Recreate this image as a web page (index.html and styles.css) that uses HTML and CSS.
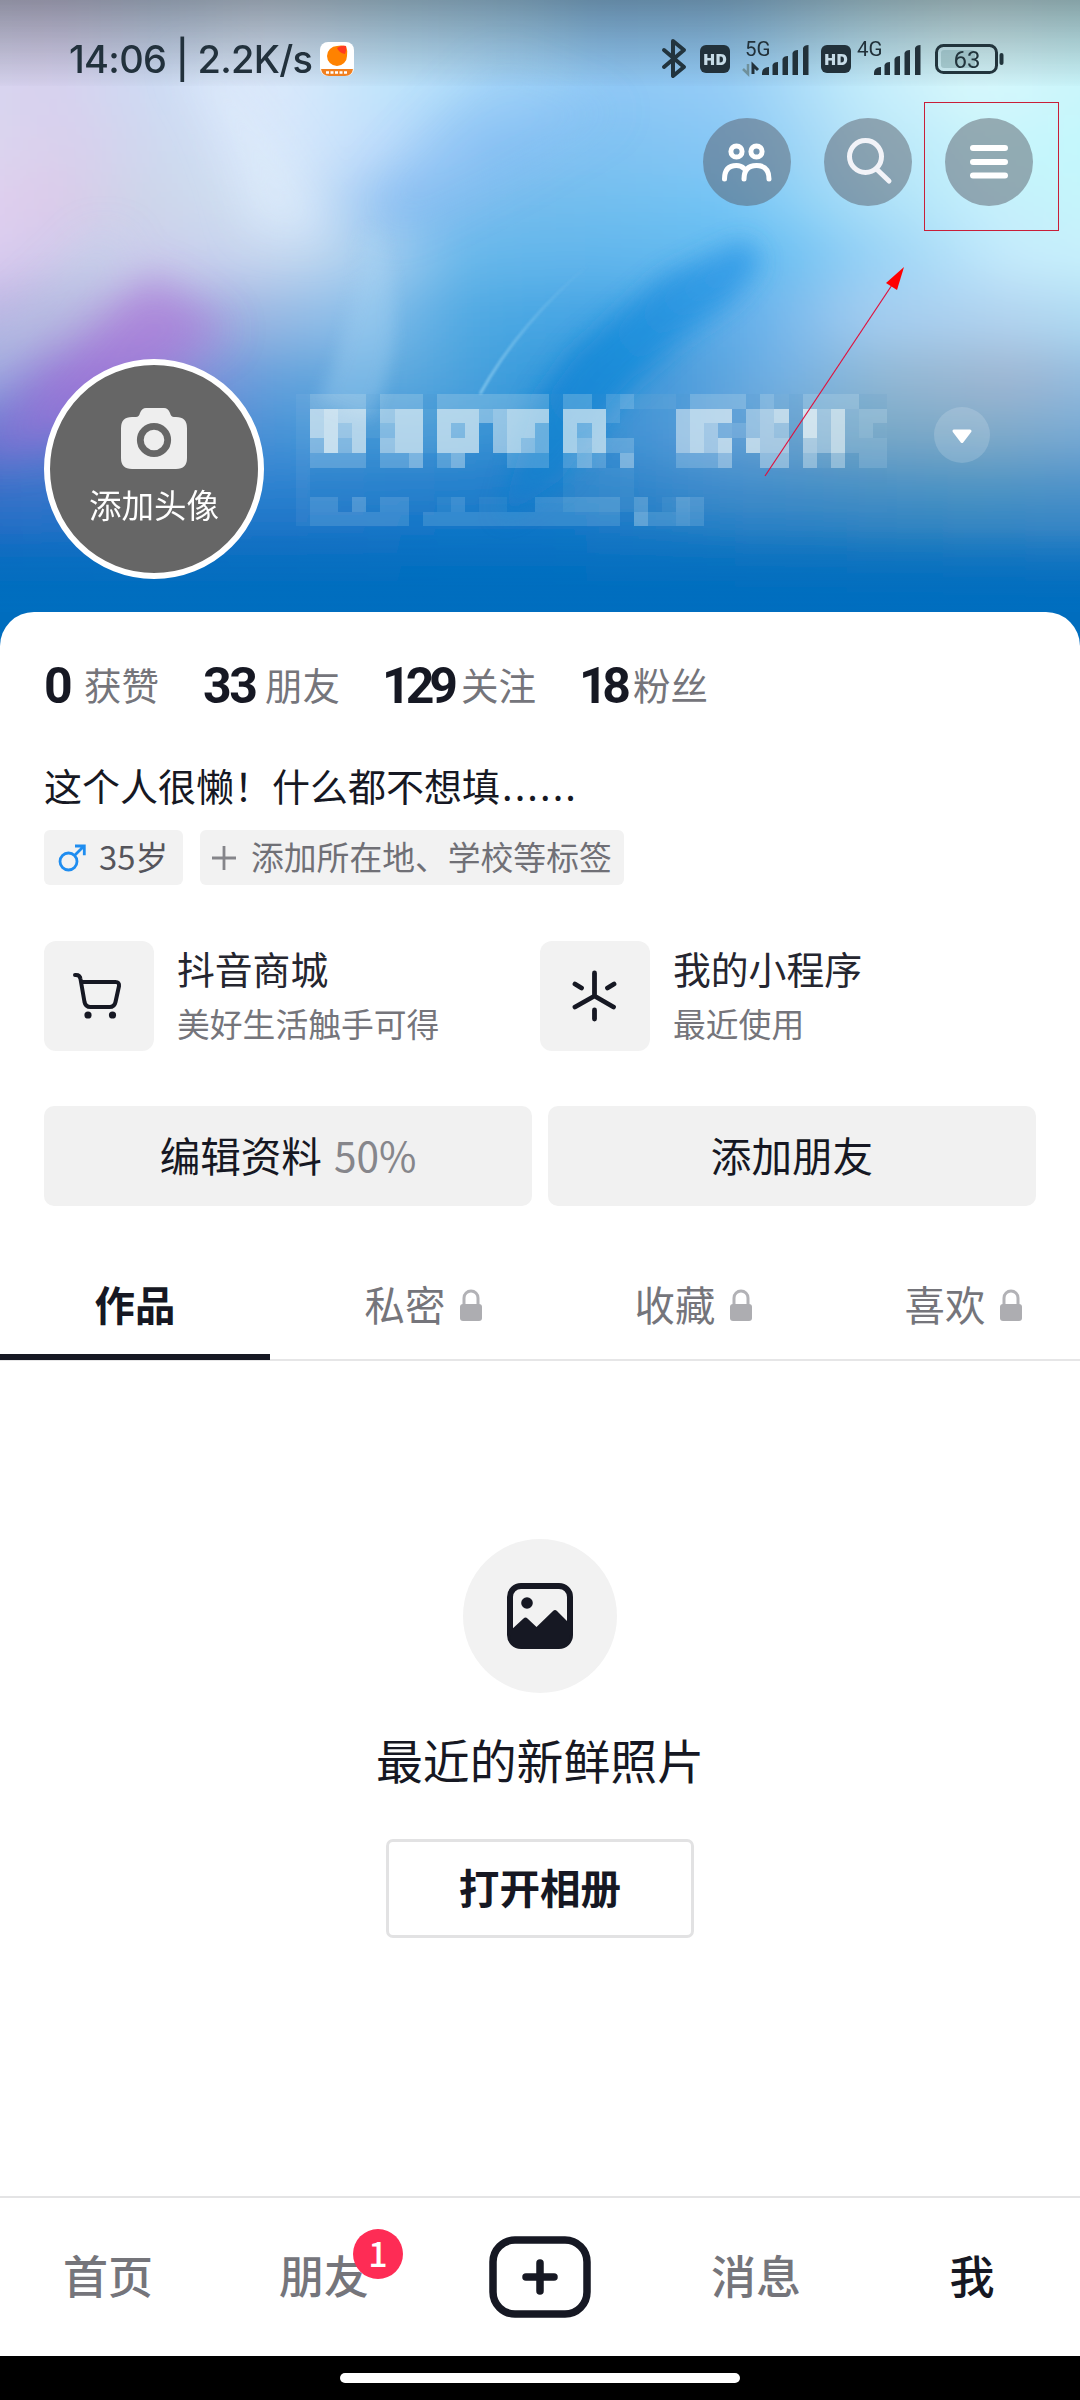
FILE: index.html
```html
<!DOCTYPE html>
<html lang="zh-CN">
<head>
<meta charset="utf-8">
<title>我</title>
<link rel="stylesheet" href="styles.css">
</head>
<body>
<div class="screen">
  <header class="hero">
    <svg class="wallpaper" viewBox="0 0 1080 660" preserveAspectRatio="none">
      <defs>
        <filter id="b30" x="-20%" y="-60%" width="140%" height="220%"><feGaussianBlur stdDeviation="24"/></filter>
        <filter id="b20" x="-60%" y="-60%" width="220%" height="220%"><feGaussianBlur stdDeviation="20"/></filter>
        <filter id="b12" x="-40%" y="-40%" width="180%" height="180%"><feGaussianBlur stdDeviation="12"/></filter>
        <filter id="b5" x="-60%" y="-20%" width="220%" height="140%"><feGaussianBlur stdDeviation="8"/></filter>
        <filter id="b1" x="-20%" y="-20%" width="140%" height="140%"><feGaussianBlur stdDeviation="1"/></filter>
        <linearGradient id="r1"><stop offset="0" stop-color="#d6dcf2"/><stop offset=".1" stop-color="#d8d0ee"/><stop offset=".2" stop-color="#ccdcf4"/><stop offset=".28" stop-color="#dde9fb"/><stop offset=".38" stop-color="#bfe4fb"/><stop offset=".48" stop-color="#a8d9f9"/><stop offset=".55" stop-color="#8fc8f5"/><stop offset=".65" stop-color="#94ccf6"/><stop offset=".76" stop-color="#c2ecfb"/><stop offset=".85" stop-color="#d8f8fc"/><stop offset="1" stop-color="#c0f4fb"/></linearGradient>
        <linearGradient id="r2"><stop offset="0" stop-color="#dcdaf0"/><stop offset=".12" stop-color="#d9cfec"/><stop offset=".2" stop-color="#cddaf0"/><stop offset=".3" stop-color="#d6e7fb"/><stop offset=".38" stop-color="#bcdcfb"/><stop offset=".46" stop-color="#8bc4f4"/><stop offset=".56" stop-color="#80c2f2"/><stop offset=".66" stop-color="#88c8f5"/><stop offset=".76" stop-color="#b8e4f8"/><stop offset=".86" stop-color="#c8f5fc"/><stop offset="1" stop-color="#c0fafc"/></linearGradient>
        <linearGradient id="r3"><stop offset="0" stop-color="#e2d3f3"/><stop offset=".11" stop-color="#dccae9"/><stop offset=".18" stop-color="#ccd5e8"/><stop offset=".3" stop-color="#d0e3f6"/><stop offset=".34" stop-color="#b5d5f5"/><stop offset=".39" stop-color="#8cc0f2"/><stop offset=".5" stop-color="#72bcec"/><stop offset=".65" stop-color="#72c4f5"/><stop offset=".76" stop-color="#a8def8"/><stop offset=".86" stop-color="#c6f0fb"/><stop offset="1" stop-color="#c4f8fc"/></linearGradient>
        <linearGradient id="r4"><stop offset="0" stop-color="#e2cef3"/><stop offset=".1" stop-color="#d4cbec"/><stop offset=".2" stop-color="#cbcfec"/><stop offset=".3" stop-color="#c4d8f0"/><stop offset=".37" stop-color="#a6ceef"/><stop offset=".44" stop-color="#66b7ea"/><stop offset=".55" stop-color="#62b6ec"/><stop offset=".68" stop-color="#62bcf2"/><stop offset=".76" stop-color="#94d0f5"/><stop offset=".88" stop-color="#c6ebfc"/><stop offset="1" stop-color="#c8f5fc"/></linearGradient>
        <linearGradient id="r5"><stop offset="0" stop-color="#c2bee8"/><stop offset=".1" stop-color="#b8aee0"/><stop offset=".2" stop-color="#b0a4de"/><stop offset=".28" stop-color="#98b8e2"/><stop offset=".35" stop-color="#8cc0ea"/><stop offset=".44" stop-color="#50a9e2"/><stop offset=".55" stop-color="#42a4e4"/><stop offset=".66" stop-color="#60aeea"/><stop offset=".76" stop-color="#a2ccf0"/><stop offset=".88" stop-color="#b2d4f0"/><stop offset="1" stop-color="#aee2f6"/></linearGradient>
        <linearGradient id="r6"><stop offset="0" stop-color="#92b0e2"/><stop offset=".1" stop-color="#9684d8"/><stop offset=".2" stop-color="#8c86d6"/><stop offset=".28" stop-color="#65a2dc"/><stop offset=".38" stop-color="#60aade"/><stop offset=".5" stop-color="#349adc"/><stop offset=".6" stop-color="#4499da"/><stop offset=".7" stop-color="#76b2e4"/><stop offset=".78" stop-color="#92b8d4"/><stop offset=".88" stop-color="#a0b6d2"/><stop offset="1" stop-color="#88c0ea"/></linearGradient>
        <linearGradient id="r7"><stop offset="0" stop-color="#6c74d2"/><stop offset=".2" stop-color="#5c82d0"/><stop offset=".3" stop-color="#4496d8"/><stop offset=".42" stop-color="#3f98d8"/><stop offset=".52" stop-color="#2a8cd4"/><stop offset=".64" stop-color="#60a0dc"/><stop offset=".75" stop-color="#76a8c6"/><stop offset=".86" stop-color="#80aac8"/><stop offset="1" stop-color="#72aadc"/></linearGradient>
        <linearGradient id="r8"><stop offset="0" stop-color="#3c6dc6"/><stop offset=".25" stop-color="#2e82d0"/><stop offset=".5" stop-color="#187bcc"/><stop offset=".65" stop-color="#3e8ccc"/><stop offset=".85" stop-color="#4c94c2"/><stop offset="1" stop-color="#4c90ce"/></linearGradient>
        <linearGradient id="r9"><stop offset="0" stop-color="#1a6cc4"/><stop offset=".5" stop-color="#0f75c6"/><stop offset=".8" stop-color="#237fc0"/><stop offset="1" stop-color="#2f82c6"/></linearGradient>
        <linearGradient id="shade" x2="0" y2="1"><stop offset="0" stop-color="#1d2428" stop-opacity=".4"/><stop offset=".5" stop-color="#1d2428" stop-opacity=".2"/><stop offset="1" stop-color="#1d2428" stop-opacity=".015"/></linearGradient>
        <linearGradient id="floor" x2="0" y2="1"><stop offset="0" stop-color="#006ebf" stop-opacity="0"/><stop offset="1" stop-color="#006ebf"/></linearGradient>
        <linearGradient id="wedge" x1="0" y1="1" x2="1" y2="0"><stop offset="0" stop-color="#0b7acc"/><stop offset=".5" stop-color="#168ad8"/><stop offset="1" stop-color="#3a9fea"/></linearGradient>
        <linearGradient id="hair" x1="0" y1="1" x2="1" y2="0"><stop offset="0" stop-color="#8cccf0"/><stop offset="1" stop-color="#8cccf0" stop-opacity="0"/></linearGradient>
      </defs>
      <g filter="url(#b30)">
        <rect x="-80" y="-80" width="1240" height="200" fill="url(#r1)"/>
        <rect x="-80" y="115" width="1240" height="60" fill="url(#r2)"/>
        <rect x="-80" y="175" width="1240" height="52" fill="url(#r3)"/>
        <rect x="-80" y="227" width="1240" height="58" fill="url(#r4)"/>
        <rect x="-80" y="285" width="1240" height="62" fill="url(#r5)"/>
        <rect x="-80" y="347" width="1240" height="58" fill="url(#r6)"/>
        <rect x="-80" y="405" width="1240" height="55" fill="url(#r7)"/>
        <rect x="-80" y="460" width="1240" height="55" fill="url(#r8)"/>
        <rect x="-80" y="515" width="1240" height="55" fill="url(#r9)"/>
        <rect x="-80" y="565" width="1240" height="200" fill="#006dbe"/>
      </g>
      <g filter="url(#b20)">
        <path d="M-30 460 Q60 370 150 275 L230 330 Q140 380 70 440Z" fill="#a76cd8" opacity=".5"/>
        <path d="M-30 400 Q60 330 130 250 L100 235 Q50 290 -30 350Z" fill="#b4d2e4" opacity=".45"/>
        <path d="M500 60 Q440 110 375 185 L385 235 Q480 200 620 110Z" fill="#7ab8f2" opacity=".25"/>
        <path d="M215 60 Q300 150 330 240 L250 230 Q230 130 180 60Z" fill="#e4effd" opacity=".5"/>
      </g>
      <path d="M535 400 L572 350 L665 275 L745 240 L762 262 L735 298 L680 340 L625 395 L560 480 L500 520Z" fill="url(#wedge)" opacity=".85" filter="url(#b12)"/>
      <path d="M362 230 Q360 310 318 400 L370 420 Q415 330 378 230Z" fill="#a9d4f3" opacity=".36" filter="url(#b5)"/>
      <path d="M480 394 Q520 322 592 262" fill="none" stroke="url(#hair)" stroke-width="3" opacity=".75" filter="url(#b1)"/>
      <rect y="530" width="1080" height="82" fill="url(#floor)"/>
      <rect width="1080" height="86" fill="url(#shade)"/>
    </svg>

    <div class="statusbar">
      <span class="clock">14:06 | 2.2K/s</span>
      <svg class="appicon" viewBox="0 0 34 34"><rect width="34" height="34" rx="8" fill="#fff"/><path d="M1 27h32q-1 7-8 7H9q-7 0-8-7Z" fill="#f08020"/><path d="M7 14a10 10 0 0 1 10-10q4-1 9 0 2 5 1 10a10 10 0 0 1-20 0Z" fill="#ff8200"/><path d="M17 6q4-3 9-2 1 4-1 8-6-1-8-6Z" fill="#ff3b20"/><path d="M6 30.500h22" stroke="#fff" stroke-width="2.500" stroke-dasharray="3 1.500"/></svg>
      <svg class="sysicons" viewBox="658 26 350 60">
        <path d="M664 50l20 17-11 9V41l11 9-20 17" fill="none" stroke="#22343e" stroke-width="4" stroke-linecap="round" stroke-linejoin="round"/>
        <g id="hd"><rect x="700" y="45" width="30" height="28" rx="6" fill="#22313a"/><text x="715" y="64.500" class="hdt">HD</text></g>
        <use href="#hd" x="121"/>
        <text x="745" y="55.500" class="net">5G</text>
        <text x="857" y="55.500" class="net">4G</text>
        <path d="M748 64v10l-5-5" fill="none" stroke="#6f909b" stroke-width="2.500"/><path d="M753 74V65l5 5" fill="none" stroke="#22313a" stroke-width="3"/>
        <g fill="#22313a"><path id="sig" d="M762 75v-2q0-5 6-6h1v8ZM772.500 75V65q1-3 5.500-3v13ZM782.500 75V59q1-3 5.500-3v19ZM792.500 75V53q1-3 5.500-3v25ZM803 75V48q1-3 5.500-3v30Z"/><use href="#sig" x="112"/></g>
        <rect x="936.500" y="45.500" width="60" height="27" rx="7" fill="none" stroke="#22343c" stroke-width="3"/>
        <rect x="941" y="50" width="34" height="18" rx="3" fill="#78a0a4" opacity=".45"/><path d="M1001.500 55v8" stroke="#22343c" stroke-width="4" stroke-linecap="round"/>
        <text x="967" y="68" class="batt">63</text>
      </svg>
    </div>

    <div class="actions">
      <span class="round"><svg viewBox="0 0 88 88"><g fill="none" stroke="#fff" stroke-width="5" stroke-linecap="round"><circle cx="33.500" cy="33.500" r="5.600"/><circle cx="53.500" cy="33.500" r="5.600"/><path d="M21.500 61q0-13.500 12-13.500 4.500 0 7.500 3"/><path d="M41 61q0-13.500 12.500-13.500T66 61"/></g></svg></span>
      <span class="round"><svg viewBox="0 0 88 88"><g fill="none" stroke="#f2f3f8" stroke-width="5" stroke-linecap="round"><circle cx="41.500" cy="38.500" r="16"/><path d="M53.500 52L65 63"/></g></svg></span>
      <span class="round"><svg viewBox="0 0 88 88"><path d="M28 30h32M28 44h32M28 57.500h32" stroke="#fff" stroke-width="6" stroke-linecap="round"/></svg></span>
    </div>

    <div class="identity">
      <div class="avatar">
        <svg viewBox="0 0 66 61"><path d="M11 9h4q3 0 4-4 2-5 6-5h18q4 0 6 5 1 4 4 4h2q11 0 11 11v30q0 11-11 11H11Q0 61 0 50V20Q0 9 11 9Z" fill="#eee"/><circle cx="33" cy="32" r="13.700" fill="#eee" stroke="#666" stroke-width="6.800"/></svg>
        <span>添加头像</span>
      </div>
      <svg class="mosaic" viewBox="0 0 42 10" preserveAspectRatio="none" shape-rendering="crispEdges">
        <path d="M1 0h41v8H1z" fill="#4c98c8" opacity=".1"/>
        <g fill="#edf5f6">
          <path opacity=".06" d="M0 0h1v9H0zM5 1h1v1h-1zM9 1h1v3h-1zM5 2h1v1h-1zM24 0h3v1h-3zM34 0h1v1h-1zM41 2h1v1h-1zM37 4h1v1h-1zM10 7h1v1h-1zM13 7h2v1h-2zM26 7h1v1h-1zM19 5h5v3h-5z"/>
          <path opacity=".14" d="M22 0h1v1h-1zM22 1h1v1h-1zM39 1h1v2h-1zM39 3h3v1h-3zM40 4h2v1h-2zM31 2h1v1h-1zM28 7h1v1h-1zM25 8h2v1h-2zM1 8h7v1H1zM9 8h14v1H9zM24 8h1v1h-1zM28 8h1v1h-1zM1 7h2v1H1zM6 7h2v1H6zM11 7h1v1h-1zM17 7h3v1h-3zM20 7h3v1h-3z"/>
          <path opacity=".2" d="M1 0h4v1H1zM6 0h3v1H6zM10 0h8v1h-8zM19 0h2v1h-2zM28 0h4v1h-4zM33 0h1v1h-1zM36 0h4v1h-4zM23 0h1v1h-1zM1 4h4v1H1zM6 4h2v1H6zM10 4h1v1h-1zM15 4h3v1h-3zM19 4h1v1h-1zM21 4h1v1h-1zM27 4h3v1h-3zM22 3h2v1h-2zM30 2h1v1h-1zM40 1h2v1h-2zM40 2h1v1h-1zM24 7h1v2h-1zM4 7h1v1H4zM27 7h1v2h-1z"/>
          <path opacity=".38" d="M6 2h1v1H6zM13 1h1v1h-1zM11 2h1v1h-1zM17 2h1v2h-1zM20 2h1v1h-1zM32 1h1v2h-1zM34 2h1v1h-1zM37 1h1v3h-1zM1 3h1v1H1zM3 3h1v1H3zM8 4h1v1H8zM11 4h1v1h-1zM20 4h1v1h-1zM23 4h1v1h-1zM30 4h1v1h-1zM33 4h2v1h-2zM36 4h1v1h-1zM38 4h1v1h-1z"/>
          <path opacity=".5" d="M3 2h1v1H3zM6 1h1v1H6zM6 3h1v1H6zM14 1h1v3h-1zM16 3h1v1h-1zM27 1h1v3h-1zM33 1h1v3h-1zM20 3h1v1h-1zM29 2h1v2h-1zM34 3h1v1h-1zM36 3h1v1h-1z"/>
          <path opacity=".66" d="M1 1h1v2H1zM3 1h2v1H3zM4 2h1v2H4zM7 1h2v3H7zM10 1h3v1h-3zM10 2h1v1h-1zM12 2h1v1h-1zM10 3h3v1h-3zM15 1h1v3h-1zM16 1h2v1h-2zM16 2h1v1h-1zM19 1h1v3h-1zM20 1h1v1h-1zM21 1h1v3h-1zM28 1h1v3h-1zM29 1h2v1h-2zM34 1h1v1h-1zM38 1h1v3h-1zM30 3h1v1h-1zM32 3h1v1h-1z"/>
          <path opacity=".78" d="M2 1h1v3H2zM36 1h1v2h-1z"/>
        </g>
      </svg>
      <span class="more"><svg viewBox="0 0 56 56"><path d="M20 24h16L28 34.500Z" fill="#fff" stroke="#fff" stroke-width="3" stroke-linejoin="round"/></svg></span>
    </div>
  </header>

  <main class="sheet">
    <ul class="stats">
      <li class="s0"><b>0</b>获赞</li><li class="s1"><b>33</b>朋友</li><li class="s2"><b>129</b>关注</li><li class="s3"><b>18</b>粉丝</li>
    </ul>
    <p class="bio">这个人很懒！什么都不想填<span>......</span></p>
    <div class="tags">
      <span class="tag age"><svg viewBox="0 0 28 28" width="28" height="28"><g fill="none" stroke="#1f8df0" stroke-width="2.800"><circle cx="10.500" cy="17.500" r="8.500"/><path d="M16.500 11.500L26 2M17 2h9.300v9.300"/></g></svg><span>35岁</span></span>
      <span class="tag add"><svg viewBox="0 0 26 26" width="26" height="26"><path d="M13 1v24M1 13h24" stroke="#85858a" stroke-width="2.800"/></svg><span>添加所在地、学校等标签</span></span>
    </div>
    <div class="services">
      <div class="service">
        <span class="tile"><svg viewBox="0 0 110 110"><g fill="none" stroke="#161823" stroke-width="4" stroke-linecap="round" stroke-linejoin="round"><path d="M31 34h1q4 0 4.500 4l4 23q1 5 6 5h19q5 0 6-5l3.500-16q.5-4-3.500-4H38"/></g><circle cx="44" cy="74" r="3.600" fill="#161823"/><circle cx="68.500" cy="74" r="3.600" fill="#161823"/></svg></span>
        <div><h3>抖音商城</h3><p>美好生活触手可得</p></div>
      </div>
      <div class="service">
        <span class="tile"><svg viewBox="0 0 110 110"><path d="M54.500 32v22.500M54.500 55L35 66M54.500 55l19 11M35 43l6.500 4M74 43l-6.500 4M54.500 69v9" fill="none" stroke="#161823" stroke-width="4.800" stroke-linecap="round"/></svg></span>
        <div><h3>我的小程序</h3><p>最近使用</p></div>
      </div>
    </div>
    <div class="buttons">
      <div class="button">编辑资料<span>50%</span></div>
      <div class="button">添加朋友</div>
    </div>
    <nav class="tabs">
      <div class="tab on">作品</div>
      <div class="tab">私密<svg class="lock" viewBox="0 0 24 34"><path d="M5 17V10a7 7 0 0 1 14 0v7" fill="none" stroke="#b2b2b6" stroke-width="3"/><rect x="1" y="16" width="22" height="17" rx="3" fill="#adadb1"/></svg></div>
      <div class="tab">收藏<svg class="lock" viewBox="0 0 24 34"><path d="M5 17V10a7 7 0 0 1 14 0v7" fill="none" stroke="#b2b2b6" stroke-width="3"/><rect x="1" y="16" width="22" height="17" rx="3" fill="#adadb1"/></svg></div>
      <div class="tab">喜欢<svg class="lock" viewBox="0 0 24 34"><path d="M5 17V10a7 7 0 0 1 14 0v7" fill="none" stroke="#b2b2b6" stroke-width="3"/><rect x="1" y="16" width="22" height="17" rx="3" fill="#adadb1"/></svg></div>
    </nav>
    <section class="empty">
      <span class="photo"><svg viewBox="0 0 66 66" width="66" height="66"><rect x="3" y="3" width="60" height="60" rx="11" fill="none" stroke="#161823" stroke-width="6"/><circle cx="20" cy="20" r="5.800" fill="#161823"/><path d="M3 48L16.500 35.500q2-2 4 0L29.500 44 46 28q2-2 4 0l13 13v11q0 11-11 11H14Q3 63 3 52Z" fill="#161823"/></svg></span>
      <h2>最近的新鲜照片</h2>
      <div class="open">打开相册</div>
    </section>
  </main>

  <footer class="nav">
    <span>首页</span>
    <span class="friends">朋友<i>1</i></span>
    <span class="plus"><svg viewBox="0 0 102 82" width="102" height="82"><rect x="4" y="4" width="94" height="74" rx="22" fill="none" stroke="#161823" stroke-width="7.500"/><path d="M51 27v28M37 41h28" stroke="#161823" stroke-width="7.500" stroke-linecap="round"/></svg></span>
    <span>消息</span>
    <span class="me">我</span>
  </footer>
  <div class="gesture"><span></span></div>

  <svg class="markup" viewBox="0 0 1080 500"><rect x="924.500" y="102.500" width="134" height="128" fill="none" stroke="#c81e38" stroke-width="1"/><path d="M765 476L892 285" stroke="#e0103c" stroke-width="1.200"/><path d="M904 267l-18 16 11 7Z" fill="#f00"/></svg>
</div>
</body>
</html>
```
FILE: styles.css
```css
* { box-sizing: border-box; margin: 0; padding: 0; }
body { background: #fff; font-family: "Noto Sans CJK SC", sans-serif; color: #161823; }
.screen { position: relative; width: 1080px; height: 2400px; overflow: hidden; display: flex; flex-direction: column; }
svg { display: block; }

.hero { position: relative; height: 612px; flex: none; }
.wallpaper { position: absolute; left: 0; top: 0; width: 1080px; height: 660px; }
.statusbar { position: relative; height: 118px; padding: 26px 72px 0 69px; display: flex; align-items: flex-start; }
.clock { font: 500 38px/46px Inter, sans-serif; width: 243px; margin-top: 10px; white-space: nowrap; letter-spacing: -.7px; color: #22313c; }
.appicon { width: 34px; height: 34px; margin: 16px 0 0 8px; }
.sysicons { width: 350px; height: 60px; margin-left: auto; }
.hdt { font: 800 16px "Open Sans", sans-serif; fill: #c6dbe6; text-anchor: middle; }
.net { font: 400 20.5px Roboto, sans-serif; fill: #22313a; }
.batt { font: 400 24px Roboto, sans-serif; fill: #22343c; text-anchor: middle; }
.actions { position: relative; display: flex; justify-content: flex-end; gap: 33px; padding-right: 47px; }
.round { width: 88px; height: 88px; border-radius: 50%; background: rgba(84, 88, 98, .47); }
.identity { position: relative; display: flex; padding: 153px 90px 0 44px; }
.avatar { width: 220px; height: 220px; border: 6px solid #fff; border-radius: 50%; background: #666; color: #fff; display: flex; flex-direction: column; align-items: center; padding-top: 43px; font-size: 32.5px; line-height: 48px; }
.avatar svg { width: 66px; height: 61px; margin-bottom: 11px; }
.mosaic { width: 591px; height: 147px; margin: 35px 0 0 32px; }
.more { width: 56px; height: 56px; border-radius: 50%; background: rgba(255, 255, 255, .16); margin: 48px 0 0 auto; }

.sheet { position: relative; flex: 1; background: #fff; border-radius: 34px 34px 0 0; padding-top: 42px; display: flex; flex-direction: column; }
.stats { list-style: none; display: flex; padding-left: 44px; height: 60px; color: #75757b; font-size: 37.5px; line-height: 60px; }
.stats li { display: flex; white-space: nowrap; }
.stats b { font: 700 50px/64px Roboto, sans-serif; letter-spacing: -2.5px; color: #161823; }
.s0 { width: 159px; }
.s0 b { width: 40px; }
.s1 { width: 179px; }
.s1 b { width: 62px; }
.s2 { width: 197px; }
.s2 b { width: 79px; letter-spacing: -5px; }
.s3 b { width: 54px; letter-spacing: -5.5px; }
.bio { padding-left: 44px; margin-top: 41px; font-size: 38px; line-height: 60px; height: 60px; white-space: nowrap; }
.bio span { letter-spacing: 2.1px; margin-left: 2px; }
.tags { display: flex; gap: 17px; padding-left: 44px; margin-top: 15px; }
.tag { height: 55px; border-radius: 6px; background: #f2f2f2; display: flex; align-items: center; white-space: nowrap; font-size: 32.8px; line-height: 51px; color: #707076; }
.tag > span { height: 55px; }
.age { width: 139px; padding-left: 14px; gap: 13px; color: #55555c; }
.add { width: 424px; padding-left: 11px; gap: 14px; }
.services { display: grid; grid-template-columns: 496px 1fr; padding: 0 44px; margin-top: 56px; }
.service { display: flex; gap: 23px; }
.tile { width: 110px; height: 110px; border-radius: 12px; background: #f2f2f2; }
.service h3 { font-size: 37.8px; font-weight: 400; line-height: 54px; color: #25262f; }
.service p { font-size: 32.8px; line-height: 56px; color: #75757b; }
.buttons { display: flex; gap: 16px; padding: 0 44px; margin-top: 55px; }
.button { flex: 1; height: 100px; border-radius: 10px; background: #f1f1f1; display: flex; align-items: center; justify-content: center; padding-bottom: 4px; font-size: 40.6px; }
.button span { color: #86868b; margin-left: 12px; }
.tabs { display: grid; grid-template-columns: repeat(4, 1fr); margin-top: 50px; height: 105px; border-bottom: 2px solid #e6e6e7; }
.tab { height: 104px; display: flex; align-items: center; justify-content: center; font-size: 40.4px; color: #75757b; padding-bottom: 10px; }
.on { font-weight: 700; color: #161823; border-bottom: 6px solid #161823; padding-bottom: 4px; }
.lock { width: 24px; height: 34px; margin: 4px -38px 0 14px; }
.empty { display: flex; flex-direction: column; align-items: center; padding-top: 178px; }
.photo { width: 154px; height: 154px; border-radius: 50%; background: #f2f2f2; display: flex; align-items: center; justify-content: center; }
.empty h2 { font-size: 46.9px; font-weight: 400; line-height: 70px; margin-top: 31px; }
.open { width: 308px; height: 99px; border: 3px solid #e2e2e3; border-radius: 7px; margin-top: 45px; font-size: 40.6px; font-weight: 600; line-height: 89px; text-align: center; }

.nav { position: relative; height: 160px; border-top: 2px solid #e4e4e5; background: #fff; display: grid; grid-template-columns: repeat(5, 1fr); align-items: center; justify-items: center; padding-bottom: 4px; font-size: 45px; font-weight: 500; line-height: 66px; color: #75757b; }
.plus { padding-top: 3px; }
.me { color: #161823; }
.friends { position: relative; }
.friends i { position: absolute; left: 74px; top: -13px; width: 50px; height: 50px; border-radius: 50%; background: #fe2c55; color: #fff; font: 500 34px/48px "Noto Sans CJK SC", sans-serif; text-align: center; }
.gesture { height: 44px; background: #000; padding-top: 17px; }
.gesture span { display: block; width: 400px; height: 10px; border-radius: 5px; background: #fff; margin: 0 auto; }
.markup { position: absolute; left: 0; top: 0; width: 1080px; height: 500px; }
```
